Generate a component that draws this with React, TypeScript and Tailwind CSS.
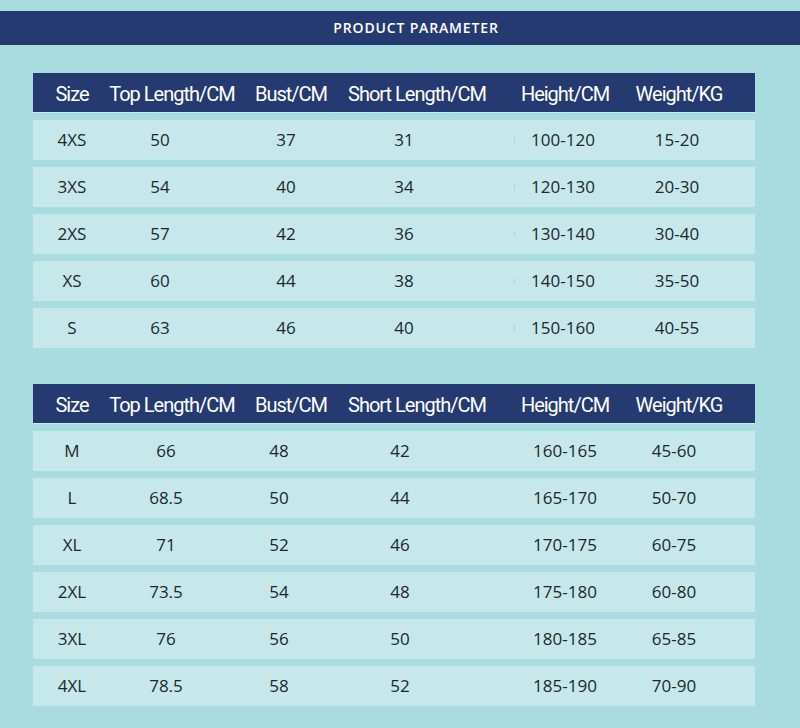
import React from "react";

const headers = ["Size", "Top Length/CM", "Bust/CM", "Short Length/CM", "Height/CM", "Weight/KG"];
const headerMl = ["ml-0", "ml-[22px]", "ml-[41px]", "ml-[48px]", "ml-[70px]", "ml-[36px]"];

const t1 = [
  ["4XS", "50", "37", "31", "100-120", "15-20"],
  ["3XS", "54", "40", "34", "120-130", "20-30"],
  ["2XS", "57", "42", "36", "130-140", "30-40"],
  ["XS", "60", "44", "38", "140-150", "35-50"],
  ["S", "63", "46", "40", "150-160", "40-55"],
];
const t2 = [
  ["M", "66", "48", "42", "160-165", "45-60"],
  ["L", "68.5", "50", "44", "165-170", "50-70"],
  ["XL", "71", "52", "46", "170-175", "60-75"],
  ["2XL", "73.5", "54", "48", "175-180", "60-80"],
  ["3XL", "76", "56", "50", "180-185", "65-85"],
  ["4XL", "78.5", "58", "52", "185-190", "70-90"],
];
const t2Ml = ["ml-0", "ml-[16px]", "ml-[35px]", "ml-[43px]", "ml-[87px]", "ml-[31px]"];

const cell = "w-[78px] shrink-0 flex justify-center whitespace-nowrap";

function Header() {
  return (
    <div className="h-[39px] pt-[2px] bg-[#253a70] flex items-center text-white text-[20px] tracking-[-0.05em] shadow-[0_1px_0_#c9ecef]" style={{ fontFamily: "Roboto, 'Open Sans', sans-serif" }}>
      {headers.map((h, i) => (
        <div key={h} className={`${cell} ${headerMl[i]}`}>{h}</div>
      ))}
    </div>
  );
}

function Row1({ r }: { r: string[] }) {
  return (
    <div className="h-[40px] bg-[#c7e8ea] flex items-center text-[17px] text-[#1b272c]">
      <div className={`${cell} ml-0`}>{r[0]}</div>
      <div className={`${cell} ml-[10px]`}>{r[1]}</div>
      <div className={`${cell} ml-[48px]`}>{r[2]}</div>
      <div className={`${cell} ml-[40px]`}>{r[3]}</div>
      <div className="ml-[71px] w-[1px] h-[6px] bg-[#aad6da] shrink-0" />
      <div className={`${cell} ml-[9px]`}>{r[4]}</div>
      <div className={`${cell} ml-[36px]`}>{r[5]}</div>
    </div>
  );
}

function Row2({ r }: { r: string[] }) {
  return (
    <div className="h-[40px] bg-[#c7e8ea] flex items-center text-[17px] text-[#1b272c]">
      {r.map((v, i) => (
        <div key={i} className={`${cell} ${t2Ml[i]}`}>{v}</div>
      ))}
    </div>
  );
}

export default function App() {
  return (
    <div className="w-[800px] h-[728px] bg-[#a9dce0] pt-[11px] overflow-hidden" style={{ fontFamily: "'Open Sans', 'Noto Sans', sans-serif" }}>
      <div className="h-[34px] bg-[#253a70] flex items-center justify-center">
        <span className="text-white text-[14px] font-semibold tracking-[0.06em] ml-[32px] -mt-[1px]" style={{ fontFamily: "'Open Sans', sans-serif" }}>PRODUCT PARAMETER</span>
      </div>
      <div className="mt-[28px] ml-[33px] w-[722px] flex flex-col gap-[7px]">
        <Header />
        <div className="mt-[1px] flex flex-col gap-[7px]">
          {t1.map((r) => <Row1 key={r[0]} r={r} />)}
        </div>
      </div>
      <div className="mt-[36px] ml-[33px] w-[722px] flex flex-col gap-[7px]">
        <Header />
        <div className="mt-[1px] flex flex-col gap-[7px]">
          {t2.map((r) => <Row2 key={r[0]} r={r} />)}
        </div>
      </div>
    </div>
  );
}
